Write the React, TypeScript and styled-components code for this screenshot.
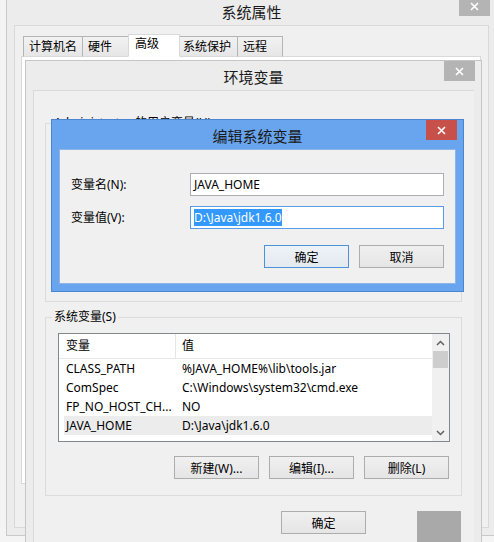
import React from 'react';
import styled, { createGlobalStyle } from 'styled-components';

const GlobalStyle = createGlobalStyle`
  html, body { margin: 0; padding: 0; background: #f4f4f4; }
  body {
    font-family: "Noto Sans", "Noto Sans CJK SC", sans-serif;
    font-size: 12px;
    color: #000;
  }
  * { box-sizing: border-box; }
`;

const Desktop = styled.div`
  position: relative;
  width: 494px;
  height: 542px;
  overflow: hidden;
  background: #f4f4f4;
`;

const Window = styled.div<{ $x: number; $y: number; $w: number; $h: number; $frame: string; $edge: string }>`
  position: absolute;
  left: ${p => p.$x}px;
  top: ${p => p.$y}px;
  width: ${p => p.$w}px;
  height: ${p => p.$h}px;
  display: flex;
  flex-direction: column;
  padding: 0 7px 7px;
  background: ${p => p.$frame};
  border: 1px solid ${p => p.$edge};
`;

const TitleBar = styled.div`
  position: relative;
  flex: 0 0 29px;
  display: flex;
  align-items: center;
  justify-content: center;
`;

const Title = styled.span`
  font-family: "Noto Sans CJK SC", sans-serif;
  font-size: 15px;
  line-height: 20px;
  color: #1a1a1a;
  padding-top: 2px;
`;

const CloseBtn = styled.div<{ $bg: string }>`
  position: absolute;
  top: 0;
  right: -1px;
  width: 31px;
  height: 20px;
  background: ${p => p.$bg};
  display: flex;
  align-items: center;
  justify-content: center;
`;

const CloseIcon = () => (
  <svg width="9" height="9" viewBox="0 0 9 9">
    <path d="M1 1 L8 8 M8 1 L1 8" stroke="#fff" strokeWidth="1.6" fill="none" />
  </svg>
);

/* ---------- System properties window ---------- */

const SysClient = styled.div`
  flex: 1;
  display: flex;
  flex-direction: column;
  background: #f0f0f0;
  border: 1px solid #d9d9d9;
  padding: 8px 7px 43px 6px;
`;

const TabStrip = styled.div`
  display: flex;
  align-items: flex-end;
  height: 23px;
  margin-left: 2px;
  margin-bottom: -1px;
  position: relative;
  z-index: 1;
`;

const Tab = styled.div<{ $active?: boolean; $w: number; $pad: number }>`
  width: ${p => p.$w}px;
  height: ${p => (p.$active ? 23 : 21)}px;
  margin-right: -1px;
  padding-left: ${p => p.$pad}px;
  border: 1px solid ${p => (p.$active ? '#d9d9d9' : '#b4b4b4')};
  border-bottom: ${p => (p.$active ? '1px solid #fff' : '1px solid #d9d9d9')};
  background: ${p => (p.$active ? '#fff' : 'linear-gradient(#f2f2f2, #e6e6e6)')};
  font-size: 12px;
  line-height: ${p => (p.$active ? 18 : 19)}px;
  white-space: nowrap;
  position: relative;
  z-index: ${p => (p.$active ? 2 : 1)};
`;

const TabPanel = styled.div`
  flex: 1;
  background: #fff;
  border: 1px solid #d9d9d9;
`;

/* ---------- Environment variables window ---------- */

const EnvClient = styled.div`
  flex: 1;
  display: flex;
  flex-direction: column;
  background: #f0f0f0;
  border-top: 1px solid #dadada;
  border-left: 1px solid #dadada;
  padding: 24px 12px 0 11px;
`;

const Group = styled.fieldset<{ $gap?: number }>`
  margin: ${p => p.$gap ?? 0}px 0 0 0;
  padding: 0;
  border: 1px solid #dcdcdc;
  min-width: 0;
`;

const Legend = styled.legend`
  margin-left: 6px;
  padding: 0 2px;
  font-size: 12px;
  line-height: 16px;
  color: #000;
`;

const GroupBody = styled.div<{ $h?: number }>`
  min-height: ${p => p.$h ?? 0}px;
  padding: 8px 11px 16px 12px;
  display: flex;
  flex-direction: column;
`;

const ListBox = styled.div`
  height: 109px;
  border: 1px solid #828790;
  background: #fff;
  display: flex;
`;

const ListMain = styled.div`
  flex: 1;
  min-width: 0;
  display: flex;
  flex-direction: column;
`;

const HeaderRow = styled.div`
  display: grid;
  grid-template-columns: 116px 1fr;
  height: 25px;
  border-bottom: 1px solid #e8e8e8;
`;

const HeaderCell = styled.div<{ $divider?: boolean }>`
  display: flex;
  align-items: center;
  padding-left: ${p => (p.$divider ? 6 : 7)}px;
  border-left: ${p => (p.$divider ? '1px solid #e5e5e5' : 'none')};
  line-height: 16px;
`;

const Row = styled.div<{ $selected?: boolean }>`
  display: grid;
  grid-template-columns: 111px 1fr;
  height: 19px;
  margin-left: 5px;
  background: ${p => (p.$selected ? '#ececec' : 'transparent')};
`;

const Cell = styled.div<{ $second?: boolean }>`
  padding-left: ${p => (p.$second ? 7 : 2)}px;
  line-height: 19px;
  white-space: nowrap;
  overflow: hidden;
`;

const ScrollBar = styled.div`
  width: 17px;
  background: #f0f0f0;
  display: flex;
  flex-direction: column;
`;

const ArrowCell = styled.div`
  height: 17px;
  display: flex;
  align-items: center;
  justify-content: center;
`;

const Thumb = styled.div`
  height: 17px;
  margin: 0 1px;
  background: #cdcdcd;
`;

const Track = styled.div`
  flex: 1;
`;

const Chevron = ({ up }: { up?: boolean }) => (
  <svg width="9" height="6" viewBox="0 0 9 6">
    <path
      d={up ? 'M1 5 L4.5 1.5 L8 5' : 'M1 1 L4.5 4.5 L8 1'}
      stroke="#606060"
      strokeWidth="1.5"
      fill="none"
    />
  </svg>
);

const ButtonRow = styled.div<{ $top: number; $gap: number; $right?: number }>`
  display: flex;
  justify-content: flex-end;
  gap: ${p => p.$gap}px;
  margin-top: ${p => p.$top}px;
  padding-right: ${p => p.$right ?? 0}px;
`;

const Button = styled.button<{ $default?: boolean }>`
  width: 85px;
  height: 23px;
  padding: 0;
  font-family: inherit;
  font-size: 12px;
  color: #000;
  border: 1px solid ${p => (p.$default ? '#4d92d6' : '#adadad')};
  background: ${p => (p.$default ? 'linear-gradient(#eef3f8, #e3e9ef)' : 'linear-gradient(#f0f0f0, #e5e5e5)')};
`;

const Mask = styled.div`
  width: 44px;
  height: 40px;
  margin-left: 51px;
  background: #a9a9a9;
`;

/* ---------- Edit window ---------- */

const EditClient = styled.div`
  flex: 1;
  background: #f0f0f0;
  border: 1px solid #8cb6e8;
  padding: 23px 11px 0 11px;
  display: flex;
  flex-direction: column;
`;

const FormGrid = styled.div`
  display: grid;
  grid-template-columns: 119px 1fr;
  grid-auto-rows: 23px;
  row-gap: 10px;
  align-items: center;
`;

const Label = styled.label`
  line-height: 16px;
`;

const Field = styled.div<{ $focused?: boolean }>`
  height: 23px;
  background: #fff;
  border: 1px solid ${p => (p.$focused ? '#569de5' : '#abadb3')};
  padding-left: 3px;
  display: flex;
  align-items: center;
  white-space: nowrap;
`;

const Selected = styled.span`
  background: #3399ff;
  color: #fff;
  line-height: 17px;
`;

const rows = [
  ['CLASS_PATH', '%JAVA_HOME%\\lib\\tools.jar'],
  ['ComSpec', 'C:\\Windows\\system32\\cmd.exe'],
  ['FP_NO_HOST_CH...', 'NO'],
  ['JAVA_HOME', 'D:\\Java\\jdk1.6.0'],
];

export default function App() {
  return (
    <>
      <GlobalStyle />
      <Desktop>
        <Window $x={6} $y={-5} $w={491} $h={541} $frame="#ececec" $edge="#c9c9c9">
          <TitleBar>
            <Title>系统属性</Title>
            <CloseBtn $bg="#b4b4b4"><CloseIcon /></CloseBtn>
          </TitleBar>
          <SysClient>
            <TabStrip>
              <Tab $w={60} $pad={5}>计算机名</Tab>
              <Tab $w={47} $pad={5}>硬件</Tab>
              <Tab $w={52} $pad={6} $active>高级</Tab>
              <Tab $w={59} $pad={3}>系统保护</Tab>
              <Tab $w={46} $pad={5}>远程</Tab>
            </TabStrip>
            <TabPanel />
          </SysClient>
        </Window>

        <Window $x={25} $y={60} $w={457} $h={500} $frame="#ececec" $edge="#c6c6c6">
          <TitleBar>
            <Title>环境变量</Title>
            <CloseBtn $bg="#b4b4b4"><CloseIcon /></CloseBtn>
          </TitleBar>
          <EnvClient>
            <Group>
              <Legend>Administrator 的用户变量(U)</Legend>
              <GroupBody $h={170} />
            </Group>
            <Group $gap={7}>
              <Legend>系统变量(S)</Legend>
              <GroupBody>
                <ListBox>
                  <ListMain>
                    <HeaderRow>
                      <HeaderCell>变量</HeaderCell>
                      <HeaderCell $divider>值</HeaderCell>
                    </HeaderRow>
                    {rows.map(([k, v], i) => (
                      <Row key={k} $selected={i === 3}>
                        <Cell>{k}</Cell>
                        <Cell $second>{v}</Cell>
                      </Row>
                    ))}
                  </ListMain>
                  <ScrollBar>
                    <ArrowCell><Chevron up /></ArrowCell>
                    <Thumb />
                    <Track />
                    <ArrowCell><Chevron /></ArrowCell>
                  </ScrollBar>
                </ListBox>
                <ButtonRow $top={14} $gap={10} $right={1}>
                  <Button>新建(W)...</Button>
                  <Button>编辑(I)...</Button>
                  <Button>删除(L)</Button>
                </ButtonRow>
              </GroupBody>
            </Group>
            <ButtonRow $top={15} $gap={0} $right={1}>
              <Button>确定</Button>
              <Mask />
            </ButtonRow>
          </EnvClient>
        </Window>

        <Window $x={51} $y={119} $w={413} $h={173} $frame="#68a5ee" $edge="#4a86cf">
          <TitleBar>
            <Title>编辑系统变量</Title>
            <CloseBtn $bg="#c7504b"><CloseIcon /></CloseBtn>
          </TitleBar>
          <EditClient>
            <FormGrid>
              <Label>变量名(N):</Label>
              <Field>JAVA_HOME</Field>
              <Label>变量值(V):</Label>
              <Field $focused><Selected>D:\Java\jdk1.6.0</Selected></Field>
            </FormGrid>
            <ButtonRow $top={16} $gap={10}>
              <Button $default>确定</Button>
              <Button>取消</Button>
            </ButtonRow>
          </EditClient>
        </Window>
      </Desktop>
    </>
  );
}
